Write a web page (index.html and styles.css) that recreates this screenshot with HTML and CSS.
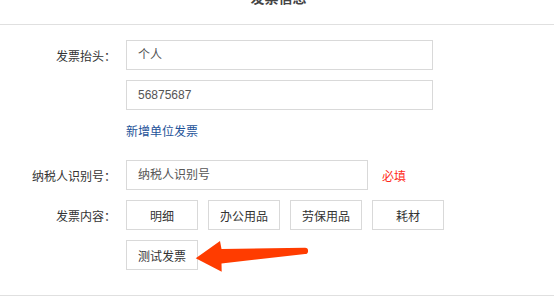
FILE: index.html
```html
<!DOCTYPE html>
<html lang="zh-CN">
<head>
    <meta charset="UTF-8">
    <meta name="viewport" content="width=device-width, initial-scale=1.0">
    <title>发票信息</title>
    <link rel="stylesheet" href="styles.css">
</head>
<body>

    <div class="modal">
        <div class="modal-hd">
            <h3>发票信息</h3>
        </div>

        <div class="modal-bd">
            <div class="form-row">
                <span class="form-label">发票抬头：</span>
                <div class="ipt ipt-long">个人</div>
            </div>

            <div class="form-row">
                <span class="form-label"></span>
                <div class="ipt ipt-long">56875687</div>
            </div>

            <div class="form-row link-row">
                <span class="form-label"></span>
                <a href="#" class="add-link">新增单位发票</a>
            </div>

            <div class="form-row">
                <span class="form-label">纳税人识别号：</span>
                <div class="ipt ipt-short">纳税人识别号</div>
                <span class="required">必填</span>
            </div>

            <div class="form-row">
                <span class="form-label">发票内容：</span>
                <div class="btn-group">
                    <button class="opt-btn">明细</button>
                    <button class="opt-btn">办公用品</button>
                    <button class="opt-btn">劳保用品</button>
                    <button class="opt-btn">耗材</button>
                </div>
            </div>

            <div class="form-row">
                <span class="form-label"></span>
                <button class="opt-btn">测试发票</button>
            </div>
        </div>

        <!-- 标注箭头 -->
        <svg class="arrow" width="120" height="45" viewBox="0 0 120 45">
            <path d="M5.7 23.3 L30 6 L31.5 14 L115 12.8 A3.1 3.1 0 0 1 115 19 L31.5 28.5 L31.7 36.7 Z" fill="#ff3c00"/>
        </svg>
    </div>

</body>
</html>
```

FILE: styles.css
```css
/* Resetando margens e paddings */
* {
    margin: 0;
    padding: 0;
    box-sizing: border-box;
}

body {
    font-family: "Liberation Sans", "Noto Sans CJK SC", sans-serif;
    font-size: 12px;
    color: #333;
    background-color: #fff;
}

.modal {
    position: relative;
    width: 554px;
    height: 297px;
    overflow: hidden;
}

.modal-hd {
    display: flow-root;
    height: 25px;
    border-bottom: 1px solid #e0e0e0;
}

.modal-hd h3 {
    margin-top: -9px;
    padding-left: 3px;
    font-size: 14px;
    line-height: 14px;
    font-weight: bold;
    color: #444;
    text-align: center;
}

.modal-bd {
    padding: 15px 0 25px;
    border-bottom: 1px solid #e0e0e0;
    display: flex;
    flex-direction: column;
    gap: 10px;
}

.form-row {
    display: flex;
    align-items: center;
}

.form-label {
    width: 116px;
    margin-right: 10px;
    text-align: right;
    color: #333;
}

.ipt {
    height: 30px;
    line-height: 28px;
    padding: 0 11px;
    border: 1px solid #d9d9d9;
    color: #555;
}

.ipt-long {
    width: 307px;
}

.ipt-short {
    width: 242px;
}

.link-row {
    height: 30px;
    padding-bottom: 10px;
}

.add-link {
    color: #1d5299;
    text-decoration: none;
}

.required {
    margin-left: 14px;
    color: #ff2a1a;
}

.btn-group {
    display: flex;
    gap: 10px;
}

.opt-btn {
    width: 72px;
    height: 30px;
    border: 1px solid #d9d9d9;
    background-color: #fff;
    color: #333;
    font-family: inherit;
    font-size: 12px;
    cursor: pointer;
}

.arrow {
    position: absolute;
    left: 190px;
    top: 235px;
}
```
